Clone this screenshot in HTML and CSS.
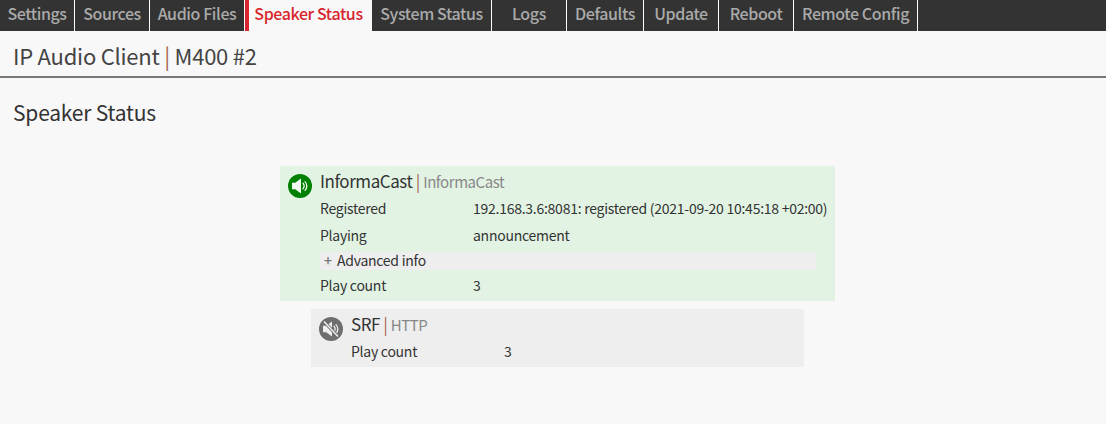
FILE: index.html
```html
<!DOCTYPE html>
<html lang="en">
<head>
<meta charset="utf-8">
<title>Speaker Status</title>
<link rel="stylesheet" href="styles.css">
</head>
<body>
<nav class="nav">
  <a class="tab">Settings</a>
  <a class="tab">Sources</a>
  <a class="tab">Audio Files</a>
  <a class="tab active">Speaker Status</a>
  <a class="tab">System Status</a>
  <a class="tab">Logs</a>
  <a class="tab">Defaults</a>
  <a class="tab">Update</a>
  <a class="tab">Reboot</a>
  <a class="tab">Remote Config</a>
</nav>
<header class="header"><h1 class="title">IP Audio Client <span class="sep">|</span> M400 #2</h1></header>
<main class="content">
  <h2 class="heading">Speaker Status</h2>
  <div class="sources">
    <section class="card card-active">
      <svg class="icon" viewBox="0 0 24 24" aria-hidden="true">
        <circle cx="12" cy="12" r="12" fill="#008000"/>
        <path d="M4 8.800h3.200L13 4.500v15L7.200 15.200H4z" fill="#f2f9f2"/>
        <path d="M15 9.300a3.800 3.800 0 0 1 0 5.400M17 7.600a6.200 6.200 0 0 1 0 8.800" fill="none" stroke="#f2f9f2" stroke-width="1.300" stroke-linecap="round"/>
      </svg>
      <div class="body">
        <div class="name">InformaCast <span class="sep">|</span> <span class="type">InformaCast</span></div>
        <div class="row"><span class="label">Registered</span><span>192.168.3.6:8081: registered (2021-09-20 10:45:18 +02:00)</span></div>
        <div class="row"><span class="label">Playing</span><span>announcement</span></div>
        <div class="advanced"><span class="plus">+</span>Advanced info</div>
        <div class="row row-count"><span class="label">Play count</span><span>3</span></div>
      </div>
    </section>
    <section class="card card-idle">
      <svg class="icon" viewBox="0 0 24 24" aria-hidden="true">
        <circle cx="12" cy="12" r="12" fill="#6e6e6e"/>
        <path d="M4 8.800h3.200L13 4.500v15L7.200 15.200H4z" fill="#eee"/>
        <path d="M15 9.300a3.800 3.800 0 0 1 0 5.400M17 7.600a6.200 6.200 0 0 1 0 8.800" fill="none" stroke="#eee" stroke-width="1.300" stroke-linecap="round"/>
        <path d="M5 4.500l14 15" stroke="#6e6e6e" stroke-width="3.200"/>
        <path d="M5 4.500l14 15" stroke="#eee" stroke-width="1.500"/>
      </svg>
      <div class="body">
        <div class="name">SRF <span class="sep">|</span> <span class="type">HTTP</span></div>
        <div class="row"><span class="label">Play count</span><span>3</span></div>
      </div>
    </section>
  </div>
</main>
</body>
</html>
```
FILE: styles.css
```css
* { box-sizing: border-box; }
html, body { margin: 0; height: 100%; overflow: hidden; }
body {
  background: #f8f8f8;
  color: #333;
  font-family: "Noto Sans CJK SC", "Noto Sans", sans-serif;
  font-size: 14px;
}
.nav {
  display: grid;
  grid-template-columns: 75px 75px 95px 127px 120px 75px 77px 75px 75px 124px;
  height: 31px;
  background: #333;
}
.tab {
  background: #333;
  border-right: 1px solid #fff;
  color: #aaa;
  font-size: 16px;
  font-weight: 500;
  letter-spacing: -0.4px;
  line-height: 27px;
  text-align: center;
  white-space: nowrap;
}
.tab.active {
  padding-right: 4px;
  background: #f8f8f8;
  border-right: 0;
  border-left: 4px solid #d9262e;
  color: #d9262e;
}
.header { height: 47px; padding-left: 13px; border-bottom: 2px solid #777; }
.title { margin: 0; font-size: 22px; font-weight: 400; letter-spacing: -0.24px; line-height: 48px; color: #444; }
.sep { color: #a5684f; font-weight: 400; }
.content { padding: 0 13px; }
.heading { margin: 19px 0 0; font-size: 21px; font-weight: 400; letter-spacing: -0.2px; line-height: 30px; color: #333; }
.sources { display: flex; flex-direction: column; align-items: center; margin-top: 39px; padding-left: 9px; gap: 8px; }
.card { display: flex; gap: 8px; padding: 5px 8px 6px; }
.card-active { background: #e2f3e4; width: 555px; }
.card-idle { background: #eee; width: 493px; }
.icon { width: 24px; height: 24px; flex: none; margin-top: 3px; }
.body { flex: 1; min-width: 0; letter-spacing: -0.26px; }
.name { height: 20px; font-size: 17px; letter-spacing: -0.45px; line-height: 20px; color: #333; }
.type { color: #888; font-size: 15px; letter-spacing: -0.45px; }
.row { display: flex; line-height: 20px; height: 20px; margin-top: 7px; white-space: nowrap; }
.label { width: 153px; flex: none; }
.advanced { height: 18px; line-height: 16px; margin: 7px 11px 0 0; padding-left: 4px; background: #eee; }
.plus { display: inline-block; width: 13px; color: #777; font-weight: 500; }
.row-count { margin-top: 5px; }
```
